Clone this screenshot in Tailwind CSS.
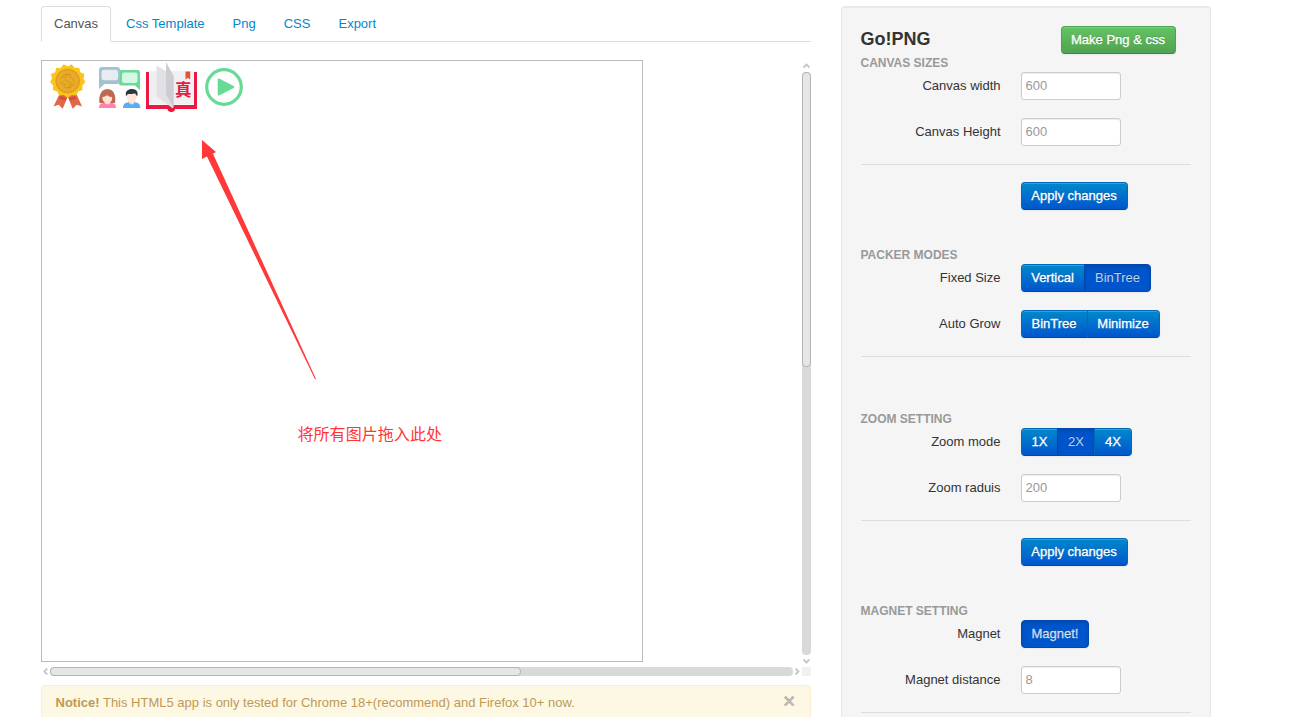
<!DOCTYPE html>
<html lang="en">
<head>
<meta charset="utf-8">
<title>Go!PNG</title>
<script src="https://cdn.jsdelivr.net/npm/@tailwindcss/browser@4"></script>
</head>
<body class="h-[717px] overflow-hidden bg-white font-['Liberation_Sans',Arial,sans-serif] text-[13px] leading-[18px] text-[#333]">
<div class="ml-[41px] flex h-[717px] w-[1170px] items-start gap-[30px] overflow-hidden pt-[6px]">
  <main class="w-[770px] shrink-0">
    <nav class="flex h-[36px] gap-[2px] border-b border-[#ddd] text-[#08c]">
      <a class="h-[36px] rounded-t-[4px] border border-[#ddd] border-b-white bg-white px-[12px] py-[8px] text-[#555]">Canvas</a>
      <a class="px-[13px] py-[9px]">Css Template</a>
      <a class="px-[13px] py-[9px]">Png</a>
      <a class="px-[13px] py-[9px]">CSS</a>
      <a class="px-[13px] py-[9px]">Export</a>
    </nav>

    <section class="mt-[18px] grid h-[616px] grid-cols-[761px_9px] grid-rows-[607px_9px]">
      <div class="overflow-hidden">
        <svg class="box-border h-[602px] w-[602px] border border-[#bbb]" viewBox="42 61 600 600">
          <!-- medal -->
          <g>
            <path d="M60 93l-6.500 13.500 5.200-1.700 4 4 5-12 5 12 4-4 5.300 1.700-6-13.500z" fill="#e2674a"/>
            <path d="M60 96l6.500 2-1 2.500-6-1.500zM75.500 96l-6.500 2 1 2.500 6-1.500z" fill="#cb5038"/>
            <path d="M67.700 66.500l4-2.200 3 3.700 4.500-.200 1 4.500 4.200 1.800-.9 4.500 1.800 3.400-3 3.400.2 4.600-4.300 1.500-1.800 4-4.700-.4-4 2.900-4-2.900-4.700.4-1.800-4-4.300-1.500.2-4.600-3-3.400 1.800-3.400-.9-4.500 4.200-1.800 1-4.500 4.500.2 3-3.700z" fill="#fac31e"/>
            <circle cx="67.700" cy="81" r="12.300" fill="#dd9e22"/>
            <circle cx="67.700" cy="81" r="10.800" fill="#e9aa27"/>
            <path d="M61.500 79c1-4.500 6-6 9.500-4-4-.3-6.500 2-5.500 4.500s6 2 5.500 5c-.3 1.500-1.500 2-3 2M74 83c-1 4.500-6 6-9.500 4M69.500 77.500c2.500-.5 4.500 1 4 4M66 84.500c-2.500.5-4.500-.5-4.500-3" fill="none" stroke="#d29522" stroke-width="1"/>
          </g>
          <!-- chat -->
          <g>
            <path d="M121 70h16.500a2.500 2.500 0 0 1 2.500 2.500v17.500l-5-4.500h-14a2 2 0 0 1-2-2V72a2 2 0 0 1 2-2z" fill="#6bd99a"/>
            <rect x="122" y="72.500" width="15.500" height="10.500" rx="2" fill="#d5f8e2"/>
            <path d="M102 67h15a3 3 0 0 1 3 3v11a3 3 0 0 1-3 3h-12.500l-5.500 5V70a3 3 0 0 1 3-3z" fill="#a3c2cf"/>
            <rect x="101.500" y="69.700" width="16.500" height="10.500" rx="2.500" fill="#e7ecf0"/>
            <path d="M99.500 103c-1-5 .5-14 8-14s8.500 9 7.500 14z" fill="#bf6850"/>
            <path d="M99 108c0-4 2-5.500 8.500-5.500s8.500 1.500 8.500 5.500z" fill="#ff82ae"/>
            <path d="M105 99h5v4.500q-2.500 2-5 0z" fill="#fbd5bf"/>
            <ellipse cx="107.300" cy="98" rx="4.900" ry="5.400" fill="#ffe3d2"/>
            <path d="M102 97c0-5 2-6 5-6s5.500 2 5.500 6c-4-.2-5-1.500-5.500-2-1 1-2 1.700-5 2z" fill="#bf6850"/>
            <path d="M123 108c0-4 2-6 8.700-6s8.600 2 8.600 6z" fill="#5aadf5"/>
            <path d="M129.200 99h5v4.500q-2.500 2-5 0z" fill="#fbd5bf"/>
            <ellipse cx="131.700" cy="97" rx="5" ry="6" fill="#ffe6d6"/>
            <path d="M126 96c-1-5 2-7 6-7 4.500 0 6.500 3 5.300 7-1.500-.5-1.300-2-2.300-2.700-2 1-5 .7-7 .7-1 .5-.7 1.500-2 2z" fill="#303543"/>
          </g>
          <!-- book -->
          <g>
            <path d="M146 72h3v33h45V72h3v37h-22c0 1.600-1 3-3.700 3s-3.700-1.400-3.700-3H146z" fill="#ec1840"/>
            <path d="M150 71h43.500v33.500H150z" fill="#f0f0f3"/>
            <path d="M156.500 65.500l16.500 10v33l-16.500-12z" fill="#e1e1e4"/>
            <path d="M166 62l7.700 14v32l-7.700-13.500z" fill="#ccccd2"/>
            <path d="M185.500 71.500h4.700v8l-2.350-1.800-2.350 1.800z" fill="#e55036"/>
            <text x="175" y="96.200" font-size="16.500" font-weight="700" font-family="'Noto Sans CJK SC',sans-serif" fill="#ec1840">真</text>
          </g>
          <!-- play -->
          <circle cx="224" cy="87" r="17.300" fill="none" stroke="#67da96" stroke-width="3.200"/>
          <path d="M218.700 79.500v15l14.500-7.500z" fill="#67da96" stroke="#67da96" stroke-width="2" stroke-linejoin="round"/>
          <!-- arrow -->
          <path d="M202 140l14 12-3 1.800L316 379l-1 .2L207 156.500l-5 2.500z" fill="#ff3939"/>
          <text x="297.500" y="440" font-size="16" font-family="'Noto Sans CJK SC',sans-serif" fill="#ff3535" textLength="144.500">将所有图片拖入此处</text>
        </svg>
      </div>
      <div class="flex flex-col items-center">
        <svg class="h-[12px] w-[9px] shrink-0" viewBox="0 0 9 12"><path d="M1.500 7.500l3-3 3 3" fill="none" stroke="#c6c6c6" stroke-width="1.800"/></svg>
        <div class="h-[583px] w-[9px] shrink-0 rounded-[4px] bg-[#d9d9d9]"><div class="h-[295px] rounded-[4px] border border-[#b3b3b3] bg-[#e6e6e6]"></div></div>
        <svg class="h-[12px] w-[9px] shrink-0" viewBox="0 0 9 12"><path d="M1.500 4.500l3 3 3-3" fill="none" stroke="#c6c6c6" stroke-width="1.800"/></svg>
      </div>
      <div class="flex items-center">
        <svg class="h-[9px] w-[9px] shrink-0" viewBox="0 0 9 9"><path d="M6.300 1.500l-3 3 3 3" fill="none" stroke="#c6c6c6" stroke-width="1.800"/></svg>
        <div class="h-[9px] w-[743px] shrink-0 rounded-[4px] bg-[#d9d9d9]"><div class="h-[9px] w-[471px] rounded-[4px] border border-[#b3b3b3] bg-[#e6e6e6]"></div></div>
        <svg class="h-[9px] w-[9px] shrink-0" viewBox="0 0 9 9"><path d="M2.500 1.500l3 3-3 3" fill="none" stroke="#c6c6c6" stroke-width="1.800"/></svg>
      </div>
      <div class="bg-[#f1f1f1]"></div>
    </section>

    <div class="mt-[9px] flex h-[36px] justify-between rounded-[4px] border border-[#fbeed5] bg-[#fcf8e3] pt-[8px] pr-[15px] pl-[13.500px] text-[#c09853] [text-shadow:0_1px_0_rgba(255,255,255,.5)]">
      <p><b>Notice!</b> This HTML5 app is only tested for Chrome 18+(recommend) and Firefox 10+ now.</p>
      <span class="text-[20px] leading-[14px] font-bold text-black/25 [-webkit-text-stroke:0.4px]">×</span>
    </div>
  </main>

  <aside class="h-[760px] w-[370px] shrink-0 rounded-[4px] border border-black/5 bg-[#f5f5f5] p-[19px] shadow-[inset_0_1px_1px_rgba(0,0,0,0.05)]">
    <div class="flex h-[28px] items-start justify-between pr-[15px]">
      <h3 class="-ml-[0.500px] text-[18px] leading-[27px] font-bold">Go!PNG</h3>
      <button class="h-[28px] w-[115px] rounded-[4px] border border-[#4da24d] border-b-[#3d853d] bg-linear-to-b from-[#62c462] to-[#51a351] pr-[1px] text-white shadow-[inset_0_1px_0_rgba(255,255,255,.2),0_1px_2px_rgba(0,0,0,.05)] [-webkit-text-stroke:0.3px] [text-shadow:0_-1px_0_rgba(0,0,0,.25)]">Make Png &amp; css</button>
    </div>
    <h6 class="-ml-[0.500px] text-[12px] leading-[18px] font-bold text-[#999]">CANVAS SIZES</h6>
    <div class="mb-[18px] flex gap-[20px]">
      <label class="w-[140px] pt-[5px] pr-[0.500px] text-right">Canvas width</label>
      <input class="h-[28px] w-[100px] rounded-[3px] border border-[#ccc] bg-white pb-[2px] pl-[3.500px] text-[#999] shadow-[inset_0_1px_1px_rgba(0,0,0,.075)]" value="600">
    </div>
    <div class="mb-[18px] flex gap-[20px]">
      <label class="w-[140px] pt-[5px] pr-[0.500px] text-right">Canvas Height</label>
      <input class="h-[28px] w-[100px] rounded-[3px] border border-[#ccc] bg-white pb-[2px] pl-[3.500px] text-[#999] shadow-[inset_0_1px_1px_rgba(0,0,0,.075)]" value="600">
    </div>
    <div class="mb-[36px] border-t border-[#ddd] pt-[17px] pl-[160px]">
      <button class="block h-[28px] w-[107px] rounded-[4px] border border-[#0069b8] border-b-[#0047a8] bg-linear-to-b from-[#08c] to-[#05c] pr-[1px] text-white shadow-[inset_0_1px_0_rgba(255,255,255,.2),0_1px_2px_rgba(0,0,0,.05)] [-webkit-text-stroke:0.3px] [text-shadow:0_-1px_0_rgba(0,0,0,.25)]">Apply changes</button>
    </div>

    <h6 class="-ml-[0.500px] text-[12px] leading-[18px] font-bold text-[#999]">PACKER MODES</h6>
    <div class="mb-[18px] flex">
      <label class="mr-[20px] w-[140px] pt-[5px] pr-[0.500px] text-right">Fixed Size</label>
      <button class="h-[28px] w-[64px] rounded-l-[4px] border border-[#0069b8] border-b-[#0047a8] bg-linear-to-b from-[#08c] to-[#05c] pr-[1px] text-white shadow-[inset_0_1px_0_rgba(255,255,255,.2),0_1px_2px_rgba(0,0,0,.05)] [-webkit-text-stroke:0.3px] [text-shadow:0_-1px_0_rgba(0,0,0,.25)]">Vertical</button>
      <button class="-ml-px h-[28px] w-[67px] rounded-r-[4px] border border-[#0048ad] bg-[#05c] text-white/75 shadow-[inset_0_2px_4px_rgba(0,0,0,.15),0_1px_2px_rgba(0,0,0,.05)] [text-shadow:0_-1px_0_rgba(0,0,0,.25)]">BinTree</button>
    </div>
    <div class="mb-[18px] flex">
      <label class="mr-[20px] w-[140px] pt-[5px] pr-[0.500px] text-right">Auto Grow</label>
      <button class="h-[28px] w-[67px] rounded-l-[4px] border border-[#0069b8] border-b-[#0047a8] bg-linear-to-b from-[#08c] to-[#05c] pr-[1px] text-white shadow-[inset_0_1px_0_rgba(255,255,255,.2),0_1px_2px_rgba(0,0,0,.05)] [-webkit-text-stroke:0.3px] [text-shadow:0_-1px_0_rgba(0,0,0,.25)]">BinTree</button>
      <button class="-ml-px h-[28px] w-[73px] rounded-r-[4px] border border-[#0069b8] border-b-[#0047a8] bg-linear-to-b from-[#08c] to-[#05c] pr-[1px] text-white shadow-[inset_0_1px_0_rgba(255,255,255,.2),0_1px_2px_rgba(0,0,0,.05)] [-webkit-text-stroke:0.3px] [text-shadow:0_-1px_0_rgba(0,0,0,.25)]">Minimize</button>
    </div>
    <div class="h-[54px] border-t border-[#ddd]"></div>

    <h6 class="-ml-[0.500px] text-[12px] leading-[18px] font-bold text-[#999]">ZOOM SETTING</h6>
    <div class="mb-[18px] flex">
      <label class="mr-[20px] w-[140px] pt-[5px] pr-[0.500px] text-right">Zoom mode</label>
      <button class="h-[28px] w-[37px] rounded-l-[4px] border border-[#0069b8] border-b-[#0047a8] bg-linear-to-b from-[#08c] to-[#05c] text-white shadow-[inset_0_1px_0_rgba(255,255,255,.2),0_1px_2px_rgba(0,0,0,.05)] [-webkit-text-stroke:0.3px] [text-shadow:0_-1px_0_rgba(0,0,0,.25)]">1X</button>
      <button class="-ml-px h-[28px] w-[38px] border border-[#0048ad] bg-[#05c] text-white/75 shadow-[inset_0_2px_4px_rgba(0,0,0,.15),0_1px_2px_rgba(0,0,0,.05)] [text-shadow:0_-1px_0_rgba(0,0,0,.25)]">2X</button>
      <button class="-ml-px h-[28px] w-[38px] rounded-r-[4px] border border-[#0069b8] border-b-[#0047a8] bg-linear-to-b from-[#08c] to-[#05c] text-white shadow-[inset_0_1px_0_rgba(255,255,255,.2),0_1px_2px_rgba(0,0,0,.05)] [-webkit-text-stroke:0.3px] [text-shadow:0_-1px_0_rgba(0,0,0,.25)]">4X</button>
    </div>
    <div class="mb-[18px] flex gap-[20px]">
      <label class="w-[140px] pt-[5px] pr-[0.500px] text-right">Zoom raduis</label>
      <input class="h-[28px] w-[100px] rounded-[3px] border border-[#ccc] bg-white pb-[2px] pl-[3.500px] text-[#999] shadow-[inset_0_1px_1px_rgba(0,0,0,.075)]" value="200">
    </div>
    <div class="mb-[36px] border-t border-[#ddd] pt-[17px] pl-[160px]">
      <button class="block h-[28px] w-[107px] rounded-[4px] border border-[#0069b8] border-b-[#0047a8] bg-linear-to-b from-[#08c] to-[#05c] pr-[1px] text-white shadow-[inset_0_1px_0_rgba(255,255,255,.2),0_1px_2px_rgba(0,0,0,.05)] [-webkit-text-stroke:0.3px] [text-shadow:0_-1px_0_rgba(0,0,0,.25)]">Apply changes</button>
    </div>

    <h6 class="-ml-[0.500px] text-[12px] leading-[18px] font-bold text-[#999]">MAGNET SETTING</h6>
    <div class="mb-[18px] flex">
      <label class="mr-[20px] w-[140px] pt-[5px] pr-[0.500px] text-right">Magnet</label>
      <button class="h-[28px] w-[68px] rounded-[4px] border border-[#0048ad] bg-[#05c] text-white/75 shadow-[inset_0_2px_4px_rgba(0,0,0,.15),0_1px_2px_rgba(0,0,0,.05)] [-webkit-text-stroke:0.3px] [text-shadow:0_-1px_0_rgba(0,0,0,.25)]">Magnet!</button>
    </div>
    <div class="mb-[18px] flex gap-[20px]">
      <label class="w-[140px] pt-[5px] pr-[0.500px] text-right">Magnet distance</label>
      <input class="h-[28px] w-[100px] rounded-[3px] border border-[#ccc] bg-white pb-[2px] pl-[3.500px] text-[#999] shadow-[inset_0_1px_1px_rgba(0,0,0,.075)]" value="8">
    </div>
    <div class="border-t border-[#ddd]"></div>
  </aside>
</div>
</body>
</html>
